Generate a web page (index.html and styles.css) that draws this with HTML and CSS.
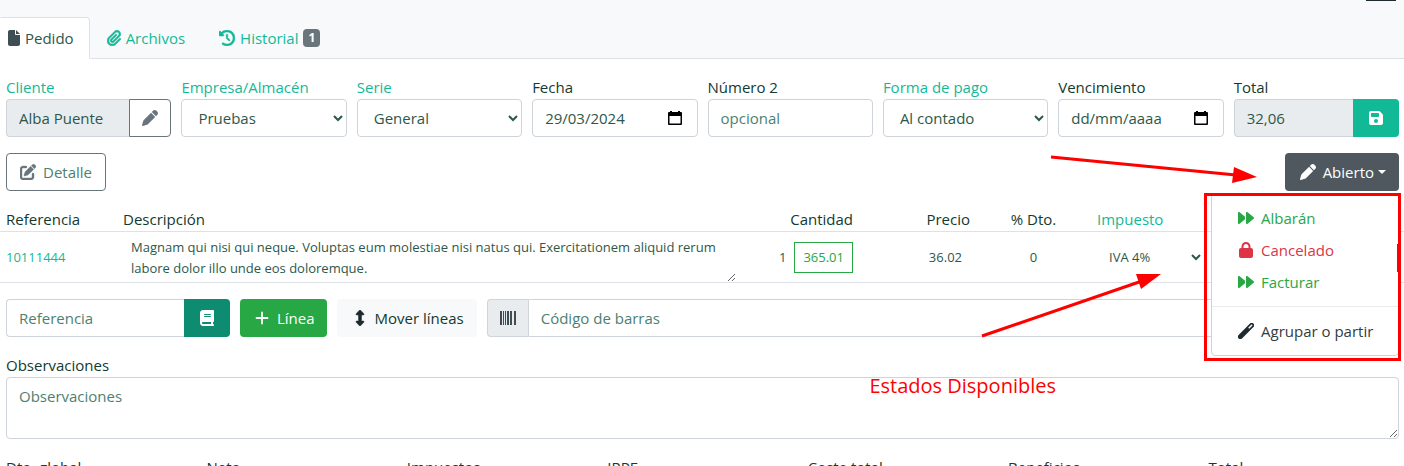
FILE: index.html
```html
<!DOCTYPE html>
<html lang="es">
<head>
  <meta charset="UTF-8" />
  <meta name="viewport" content="width=device-width, initial-scale=1.0"/>
  <title>Pedido</title>
  <link rel="stylesheet" href="styles.css">
</head>
<body>
  <!-- icons -->
  <svg class="sprite" aria-hidden="true">
    <symbol id="i-file" viewBox="0 0 384 512"><path d="M0 64C0 28.7 28.7 0 64 0H224V128c0 17.7 14.3 32 32 32H384V448c0 35.3-28.7 64-64 64H64c-35.3 0-64-28.7-64-64V64zm384 64H256V0L384 128z"/></symbol>
    <symbol id="i-clip" viewBox="0 0 448 512"><path stroke="currentColor" stroke-width="18" d="M364.2 83.8c-24.4-24.4-64-24.4-88.4 0l-184 184c-42.1 42.1-42.1 110.3 0 152.4s110.3 42.1 152.4 0l152-152c10.9-10.9 28.7-10.9 39.6 0s10.9 28.7 0 39.6l-152 152c-64 64-167.6 64-231.6 0s-64-167.6 0-231.6l184-184c46.3-46.3 121.3-46.3 167.6 0s46.3 121.3 0 167.6l-176 176c-28.6 28.6-75 28.6-103.6 0s-28.6-75 0-103.6l144-144c10.9-10.9 28.7-10.9 39.6 0s10.9 28.7 0 39.6l-144 144c-6.7 6.7-6.7 17.7 0 24.4s17.7 6.7 24.4 0l176-176c24.4-24.4 24.4-64 0-88.4z"/></symbol>
    <symbol id="i-history" viewBox="0 0 512 512"><path stroke="currentColor" stroke-width="16" d="M75 75L41 41C25.9 25.9 0 36.6 0 57.9V168c0 13.3 10.7 24 24 24H134.1c21.4 0 32.1-25.9 17-41l-30.8-30.8C155 85.5 203 64 256 64c106 0 192 86 192 192s-86 192-192 192c-40.8 0-78.6-12.7-109.7-34.4c-14.5-10.1-34.4-6.6-44.6 7.9s-6.6 34.4 7.9 44.6C151.2 495 201.7 512 256 512c141.4 0 256-114.6 256-256S397.4 0 256 0C185.3 0 121.3 28.7 75 75zm181 53c-13.3 0-24 10.7-24 24V256c0 6.4 2.5 12.5 7 17l72 72c9.4 9.4 24.6 9.4 33.9 0s9.4-24.6 0-33.9l-65-65V152c0-13.3-10.7-24-24-24z"/></symbol>
    <symbol id="i-pen" viewBox="0 0 512 512"><path d="M362.7 19.3L314.3 67.7 444.3 197.7l48.4-48.4c25-25 25-65.5 0-90.5L453.3 19.3c-25-25-65.5-25-90.5 0zm-71 71L58.6 323.5c-10.4 10.4-18 23.3-22.2 37.4L1 481.2C-1.5 489.7 .8 498.8 7 505s15.3 8.5 23.7 6.1l120.3-35.4c14.1-4.2 27-11.8 37.4-22.2L421.7 220.3 291.7 90.3z"/></symbol>
    <symbol id="i-edit" viewBox="0 0 512 512"><path stroke="currentColor" stroke-width="12" d="M471.6 21.7c-21.9-21.9-57.3-21.9-79.2 0L362.3 51.7l97.9 97.9 30.1-30.1c21.9-21.9 21.9-57.3 0-79.2L471.6 21.7zm-299.2 220c-6.1 6.1-10.8 13.6-13.5 21.9l-29.6 88.8c-2.9 8.6-.6 18.1 5.8 24.6s15.9 8.7 24.6 5.8l88.8-29.6c8.2-2.7 15.7-7.4 21.9-13.5L437.7 172.3 339.7 74.3 172.4 241.7zM96 64C43 64 0 107 0 160V416c0 53 43 96 96 96H352c53 0 96-43 96-96V320c0-17.7-14.3-32-32-32s-32 14.3-32 32v96c0 17.7-14.3 32-32 32H96c-17.7 0-32-14.3-32-32V160c0-17.7 14.3-32 32-32h96c17.7 0 32-14.3 32-32s-14.3-32-32-32H96z"/></symbol>
    <symbol id="i-save" viewBox="0 0 448 512"><path d="M64 32C28.7 32 0 60.7 0 96V416c0 35.3 28.7 64 64 64H384c35.3 0 64-28.7 64-64V173.3c0-17-6.7-33.3-18.7-45.3L352 50.7C340 38.7 323.7 32 306.7 32H64zm0 96c0-17.7 14.3-32 32-32H288c17.7 0 32 14.3 32 32v64c0 17.7-14.3 32-32 32H96c-17.7 0-32-14.3-32-32V128zM224 288a64 64 0 1 1 0 128 64 64 0 1 1 0-128z"/></symbol>
    <symbol id="i-book" viewBox="0 0 448 512"><path d="M96 0C43 0 0 43 0 96V416c0 53 43 96 96 96H384h32c17.7 0 32-14.3 32-32s-14.3-32-32-32V384c17.7 0 32-14.3 32-32V32c0-17.7-14.3-32-32-32H384 96zm0 384H352v64H96c-17.7 0-32-14.3-32-32s14.3-32 32-32zm32-240c0-8.8 7.2-16 16-16H336c8.8 0 16 7.2 16 16s-7.2 16-16 16H144c-8.8 0-16-7.2-16-16zm16 48H336c8.8 0 16 7.2 16 16s-7.2 16-16 16H144c-8.8 0-16-7.2-16-16s7.2-16 16-16z"/></symbol>
    <symbol id="i-plus" viewBox="0 0 448 512"><path d="M224 80V432M48 256H400" fill="none" stroke="currentColor" stroke-width="58" stroke-linecap="round"/></symbol>
    <symbol id="i-updown" viewBox="0 0 256 512"><path stroke="currentColor" stroke-width="16" d="M145.6 7.7C141 2.8 134.7 0 128 0s-13 2.8-17.6 7.700l-104 112c-6.5 7-8.2 17.2-4.4 25.9S14.5 160 24 160H80V352H24c-9.5 0-18.2 5.7-22 14.4s-2.100 18.9 4.4 25.9l104 112c4.5 4.9 10.9 7.7 17.6 7.7s13-2.8 17.6-7.7l104-112c6.5-7 8.2-17.2 4.4-25.9s-12.5-14.4-22-14.4H176V160h56c9.5 0 18.2-5.7 22-14.4s2.1-18.9-4.4-25.9l-104-112z"/></symbol>
    <symbol id="i-barcode" viewBox="0 0 16 16"><path d="M0 1h2v14H0zM3 1h1v14H3zM5 1h1v14H5zM7 1h2v14H7zM10 1h2v14h-2zM14 1h2v14h-2z"/></symbol>
    <symbol id="i-forward" viewBox="0 0 512 512"><path d="M52.5 440.6c-9.5 7.9-22.8 9.7-34.1 4.4S0 428.4 0 416V96C0 83.6 7.2 72.3 18.4 67s24.5-3.6 34.1 4.4L224 214.3V256v41.7L52.5 440.6zM256 352V256 128 96c0-12.4 7.2-23.7 18.4-29s24.5-3.6 34.1 4.4l192 160c7.3 6.1 11.5 15.1 11.5 24.6s-4.2 18.5-11.5 24.6l-192 160c-9.5 7.9-22.8 9.7-34.1 4.4s-18.4-16.6-18.4-29V352z"/></symbol>
    <symbol id="i-lock" viewBox="0 0 448 512"><path d="M144 144v48H304V144c0-44.2-35.8-80-80-80s-80 35.8-80 80zM80 192V144C80 64.5 144.5 0 224 0s144 64.5 144 144v48h16c35.3 0 64 28.7 64 64V448c0 35.3-28.7 64-64 64H64c-35.3 0-64-28.7-64-64V256c0-35.3 28.7-64 64-64H80z"/></symbol>
    <symbol id="i-wand" viewBox="0 0 16 16"><path fill-rule="evenodd" d="M.6 12 12 .6a2.400 2.400 0 0 1 3.400 3.400L4 15.400A2.400 2.400 0 0 1 .6 12zM10.200 4.800l1 1 3-3a.7.7 0 0 0-1-1z"/></symbol>
    <symbol id="i-calendar" viewBox="0 0 14 14"><path fill-rule="evenodd" d="M2 0h2v1h6V0h2v1h1q1 0 1 1v11q0 1-1 1H1q-1 0-1-1V2q0-1 1-1h1zM1.500 5v7.500h11V5z"/></symbol>
  </svg>

  <header class="top">
    <span class="top-pill"></span>
    <nav class="tabs">
      <a href="#pedido" class="tab active"><svg class="icon narrow"><use href="#i-file"/></svg>Pedido</a>
      <a href="#archivos" class="tab"><svg class="icon clip"><use href="#i-clip"/></svg>Archivos</a>
      <a href="#historial" class="tab"><svg class="icon"><use href="#i-history"/></svg>Historial <span class="badge">1</span></a>
    </nav>
  </header>

  <main>
    <div class="form-row">
      <div class="field">
        <label for="cliente" class="link">Cliente</label>
        <div class="group">
          <input type="text" id="cliente" class="control" value="Alba Puente" readonly>
          <button class="btn outline" aria-label="Editar"><svg class="icon"><use href="#i-pen"/></svg></button>
        </div>
      </div>
      <div class="field">
        <label for="almacen" class="link">Empresa/Almacén</label>
        <select id="almacen" class="control"><option>Pruebas</option></select>
      </div>
      <div class="field">
        <label for="serie" class="link">Serie</label>
        <select id="serie" class="control"><option>General</option></select>
      </div>
      <div class="field">
        <label for="fecha">Fecha</label>
        <div class="control date">
          <input type="text" id="fecha" value="29/03/2024">
          <button aria-label="Calendario"><svg><use href="#i-calendar"/></svg></button>
        </div>
      </div>
      <div class="field">
        <label for="numero2">Número 2</label>
        <input type="text" id="numero2" class="control" placeholder="opcional">
      </div>
      <div class="field">
        <label for="pago" class="link">Forma de pago</label>
        <select id="pago" class="control"><option>Al contado</option></select>
      </div>
      <div class="field">
        <label for="vencimiento">Vencimiento</label>
        <div class="control date">
          <input type="text" id="vencimiento" class="empty" placeholder="dd/mm/aaaa">
          <button aria-label="Calendario"><svg><use href="#i-calendar"/></svg></button>
        </div>
      </div>
      <div class="field">
        <label for="total">Total</label>
        <div class="group">
          <input type="text" id="total" class="control" value="32,06" readonly>
          <button class="btn save" aria-label="Guardar"><svg class="icon"><use href="#i-save"/></svg></button>
        </div>
      </div>
    </div>

    <div class="actions">
      <button class="btn outline detail"><svg class="icon"><use href="#i-edit"/></svg>Detalle</button>
      <div class="dropdown">
        <button class="btn state"><svg class="icon"><use href="#i-pen"/></svg>Abierto<span class="caret"></span></button>
        <div class="menu">
          <a href="#albaran" class="item success"><svg class="icon"><use href="#i-forward"/></svg>Albarán</a>
          <a href="#cancelado" class="item danger"><svg class="icon"><use href="#i-lock"/></svg>Cancelado</a>
          <a href="#facturar" class="item success"><svg class="icon"><use href="#i-forward"/></svg>Facturar</a>
          <hr>
          <a href="#agrupar" class="item"><svg class="icon dark"><use href="#i-wand"/></svg>Agrupar o partir</a>
        </div>
      </div>
    </div>

    <table class="lines">
      <thead>
        <tr>
          <th class="ref">Referencia</th>
          <th>Descripción</th>
          <th class="num">Cantidad</th>
          <th class="num">Precio</th>
          <th class="mid">% Dto.</th>
          <th><a href="#impuestos">Impuesto</a></th>
          <th class="rest"></th>
        </tr>
      </thead>
      <tbody>
        <tr>
          <td class="ref"><a href="#10111444">10111444</a></td>
          <td><textarea class="desc" rows="2" aria-label="Descripción">Magnam qui nisi qui neque. Voluptas eum molestiae nisi natus qui. Exercitationem aliquid rerum labore dolor illo unde eos doloremque.</textarea></td>
          <td><div class="qty"><input type="text" value="1" aria-label="Cantidad"><button class="stock">365.01</button></div></td>
          <td><input type="text" class="num" value="36.02" aria-label="Precio"></td>
          <td><input type="text" class="mid" value="0" aria-label="Dto."></td>
          <td><select class="tax" aria-label="Impuesto"><option>IVA 4%</option></select></td>
          <td></td>
        </tr>
      </tbody>
    </table>

    <div class="tools">
      <div class="group ref-group">
        <input type="text" class="control" placeholder="Referencia" aria-label="Referencia">
        <button class="btn book" aria-label="Productos"><svg class="icon"><use href="#i-book"/></svg></button>
      </div>
      <button class="btn add"><svg class="icon"><use href="#i-plus"/></svg>Línea</button>
      <button class="btn light"><svg class="icon"><use href="#i-updown"/></svg>Mover líneas</button>
      <div class="group grow">
        <label class="addon" for="barras"><svg class="icon"><use href="#i-barcode"/></svg></label>
        <input type="text" id="barras" class="control" placeholder="Código de barras">
      </div>
    </div>

    <div class="field notes">
      <label for="obs">Observaciones</label>
      <textarea id="obs" class="control" placeholder="Observaciones"></textarea>
    </div>

    <div class="form-row totals">
      <div class="field">Dto. global</div>
      <div class="field">Neto</div>
      <div class="field">Impuestos</div>
      <div class="field">IRPF</div>
      <div class="field">Coste total</div>
      <div class="field">Beneficios</div>
      <div class="field">Total</div>
    </div>
  </main>

  <!-- notes over the page -->
  <svg class="arrows" viewBox="944 150 460 250" aria-hidden="true">
    <path d="M1051 157 1236 175M982 336 1142 281" stroke="#f00" stroke-width="3"/>
    <path d="M1234 167 1257 177 1232 183zM1136 274 1161 274 1141 289z" fill="#f00"/>
    <path d="M1397 244h2v28h-2z" fill="#f00"/>
  </svg>
  <div class="frame"></div>
  <p class="note">Estados Disponibles</p>
</body>
</html>
```
FILE: styles.css
```css
* {
  box-sizing: border-box;
}

body {
  position: relative;
  margin: 0;
  font-family: "Open Sans", "Noto Sans", sans-serif;
  font-size: 15px;
  line-height: 24px;
  color: #123a2e;
  background: #fff;
  overflow: hidden;
}

input, select, textarea, button {
  margin: 0;
  font: inherit;
  color: #2c584a;
}

a, .link {
  color: #12b997;
  text-decoration: none;
}

.sprite {
  position: absolute;
  width: 0;
  height: 0;
}

.icon {
  flex: none;
  width: 16px;
  height: 16px;
  fill: currentColor;
  overflow: visible;
}

.icon.narrow {
  width: 12px;
}

.icon.clip {
  width: 14px;
}

.icon.dark {
  color: #1d2b2e;
}

/* tabs */
.top {
  padding-top: 17px;
  background: #f8f9fb;
  border-bottom: 1px solid #dee2e6;
}

.top-pill {
  position: absolute;
  top: 0;
  right: 8px;
  width: 30px;
  height: 1px;
  background: #1d2b2e;
}

.tabs {
  display: flex;
  margin-bottom: -1px;
}

.tab {
  display: flex;
  align-items: center;
  gap: 5px;
  height: 42px;
  padding: 0 16px;
  border: 1px solid transparent;
}

.tab.active {
  padding-left: 7px;
  padding-right: 15px;
  color: #2c584a;
  background: #fff;
  border-color: #dee2e6 #dee2e6 #fff transparent;
  border-radius: 0 4px 0 0;
}

.tab.active .icon {
  color: #3f4d54;
}

.badge {
  padding: 0 5px;
  font-size: 12px;
  font-weight: bold;
  line-height: 18px;
  color: #fff;
  background: #69757d;
  border-radius: 4px;
}

/* form */
main {
  padding-top: 16px;
}

.form-row {
  display: flex;
  gap: 10px;
  padding: 0 5px 0 6px;
}

.field {
  flex: 1 1 0;
  min-width: 0;
}

.field label {
  display: block;
  white-space: nowrap;
}

.control {
  display: block;
  width: 100%;
  min-width: 0;
  height: 38px;
  padding: 6px 12px;
  background: #fff;
  border: 1px solid #ced4da;
  border-radius: 4px;
}

.control::placeholder {
  color: #4c8171;
  opacity: 1;
}

.control[readonly] {
  background: #e9ecef;
}

.group {
  display: flex;
}

.group > :first-child {
  border-top-right-radius: 0;
  border-bottom-right-radius: 0;
}

.group > :last-child {
  border-top-left-radius: 0;
  border-bottom-left-radius: 0;
}

.group > :first-child:not(.addon) {
  border-right: 0;
}

.date {
  display: flex;
  align-items: center;
  padding-right: 15px;
}

.date input {
  flex: 1;
  width: 0;
  min-width: 0;
  padding: 0;
  border: 0;
}

.date .empty::placeholder {
  color: #2c584a;
  opacity: 1;
}

.date button {
  display: flex;
  padding: 0;
  background: none;
  border: 0;
}

.date svg {
  width: 14px;
  height: 14px;
  fill: #000;
}

.btn {
  display: flex;
  flex: none;
  align-items: center;
  gap: 7px;
  height: 38px;
  padding: 0 12px;
  color: #fff;
  border: 1px solid transparent;
  border-radius: 4px;
  white-space: nowrap;
}

.btn.outline {
  color: #69757d;
  background: #fff;
  border-color: #69757d;
}

.btn.save {
  padding: 0 14px;
  background: #12b997;
}

.btn.book {
  padding: 0 14px;
  background: #0e8c72;
}

.btn.detail {
  padding: 0 13px;
  color: #4c8171;
}

.detail .icon {
  color: #69757d;
}

.btn.state {
  padding: 0 12px 0 14px;
  background: #4e585e;
}

.btn.add {
  padding: 0 11px 0 13px;
  background: #28a745;
}

.btn.light {
  padding: 0 12px 0 14px;
  color: #123a2e;
  background: #f8f9fb;
}

.light .icon {
  color: #1d2b2e;
}

.caret {
  margin-left: -3px;
  border: 4px solid transparent;
  border-top-color: #fff;
  border-bottom: 0;
}

.addon {
  display: flex;
  align-items: center;
  padding: 0 12px;
  color: #3f4d54;
  background: #e9ecef;
  border: 1px solid #ced4da;
  border-right: 0;
  border-radius: 4px;
}

.actions {
  display: flex;
  justify-content: space-between;
  padding: 16px 5px 16px 6px;
}

.dropdown {
  position: relative;
}

.menu {
  position: absolute;
  top: 40px;
  right: 0;
  z-index: 2;
  width: 188px;
  padding: 8px 0;
  background: #fff;
  border: 1px solid #d0d2d4;
  border-radius: 4px;
}

.menu hr {
  margin: 8px 0;
  border: 0;
  border-top: 1px solid #e9ecef;
}

.item {
  display: flex;
  align-items: center;
  gap: 7px;
  padding: 4px 24px 4px 26px;
  color: #343b40;
  white-space: nowrap;
}

.success {
  color: #28a745;
}

.danger {
  color: #dc3545;
}

/* order lines */
.lines {
  width: 100%;
  table-layout: fixed;
  border-collapse: separate;
  border-spacing: 0;
}

.lines th, .lines td {
  width: 117px;
  padding: 0 5px;
  font-weight: normal;
  text-align: left;
  border-bottom: 1px solid #dee2e6;
}

.lines th:nth-child(2) {
  width: auto;
}

.lines .ref {
  width: 118px;
  padding-left: 6px;
}

.lines .rest {
  width: 195px;
}

.lines td, .lines td input, .lines td select, .lines td textarea, .lines td button {
  font-size: 13px;
}

.lines .num {
  text-align: right;
}

.lines .mid {
  text-align: center;
}

.lines input {
  width: 100%;
  min-width: 0;
  padding: 0 8px;
  background: none;
  border: 0;
}

.desc {
  display: block;
  width: 100%;
  height: 50px;
  padding: 5px 8px 3px;
  line-height: 21px;
  border: 0;
  overflow: hidden;
}

.qty {
  display: flex;
  align-items: center;
  gap: 8px;
}

.qty input {
  flex: 1;
  padding: 0;
  text-align: right;
}

.qty .stock {
  height: 31px;
  padding: 0 8px;
  color: #28a745;
  background: #fff;
  border: 1px solid #28a745;
}

.tax {
  width: 100%;
  height: 31px;
  padding: 0 0 0 8px;
  background: #fff;
  border: 0;
}

.tools {
  display: flex;
  gap: 10px;
  padding: 16px 5px 16px 6px;
}

.ref-group {
  width: 224px;
}

.grow {
  flex: 1;
}

.notes {
  padding: 0 5px 0 6px;
}

.notes textarea {
  height: 62px;
}

.totals {
  padding-top: 16px;
}

/* notes */
.arrows {
  position: absolute;
  top: 150px;
  right: 0;
  z-index: 3;
  width: 460px;
  height: 250px;
  pointer-events: none;
}

.frame {
  position: absolute;
  top: 193px;
  right: 3px;
  z-index: 3;
  width: 197px;
  height: 168px;
  border: 3px solid #f00;
  pointer-events: none;
}

.note {
  position: absolute;
  top: 374px;
  right: 348px;
  z-index: 3;
  margin: 0;
  font-size: 20px;
  color: #f00;
}
```
